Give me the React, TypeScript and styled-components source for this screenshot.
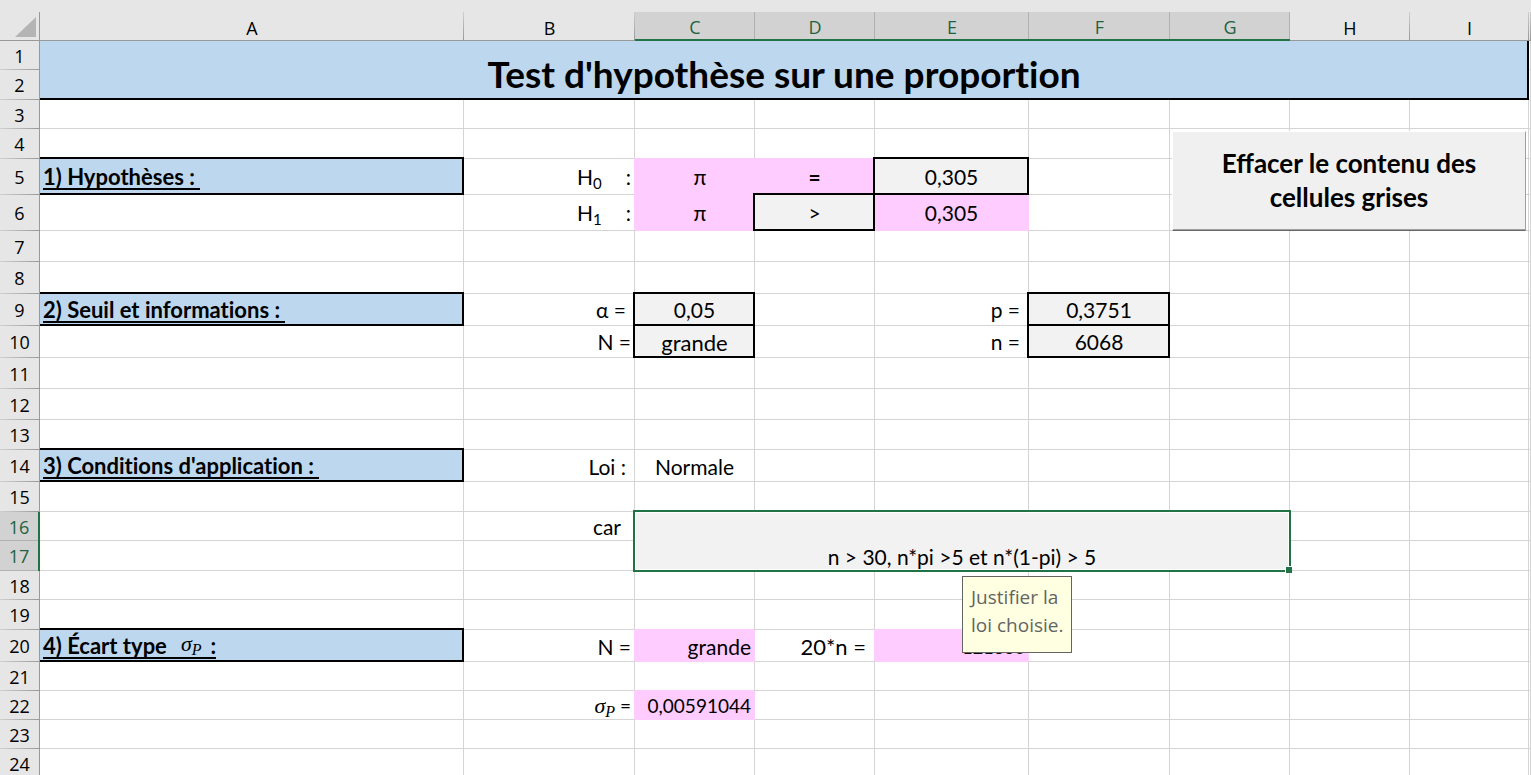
import React from "react";
import styled, { createGlobalStyle, css } from "styled-components";

const GREEN = "#217346";
const GRID = "#d4d4d4";
const HEAD = "#e6e6e6";
const HEAD_LINE = "#999999";
const SELECTED_HEAD = "#d2d2d2";
const INK = "#000000";

const fills = {
  none: "",
  pink: "#ffccff",
  gray: "#f2f2f2",
  blue: "#bdd7ee",
};

const sizes = { xs: 18, s: 19, t: 21, m: 21, w: 22, l: 37 };

const GlobalStyle = createGlobalStyle`
  *, *::before, *::after { box-sizing: border-box; }
  html, body { margin: 0; background: #fff; }
`;

const Sheet = styled.main`
  height: 100vh;
  overflow: hidden;
  padding-top: 12px;
  background: linear-gradient(${HEAD} 12px, #ffffff 12px);
  color: ${INK};
  font-family: Lato, "Open Sans", sans-serif;
  font-variant-ligatures: none;
`;

const Grid = styled.table`
  width: 100%;
  table-layout: fixed;
  border-collapse: separate;
  border-spacing: 0;
`;

const Col = styled.col<{ $w?: number }>`
  ${(p) => p.$w && `width: ${p.$w}px;`}
`;

const Row = styled.tr<{ $h: number }>`
  height: ${(p) => p.$h}px;
`;

const headText = css`
  padding: 0;
  font: 400 18px/24px "Open Sans", "Noto Sans", sans-serif;
  text-align: center;
  vertical-align: middle;
`;

const ColHead = styled.th<{ $selected?: boolean }>`
  ${headText}
  position: relative;
  padding-top: 3px;
  background: ${(p) => (p.$selected ? SELECTED_HEAD : HEAD)};
  color: ${(p) => (p.$selected ? "#1e6340" : INK)};
  border-bottom: ${(p) => (p.$selected ? `2px solid ${GREEN}` : `1px solid ${HEAD_LINE}`)};
  &::after {
    content: "";
    position: absolute;
    top: 0;
    right: 0;
    bottom: 0;
    width: 1px;
    background: ${(p) => (p.$selected ? "#b1b1b1" : `linear-gradient(#cfcfcf, ${HEAD_LINE})`)};
  }
`;

const Corner = styled.td`
  padding: 0 3px 3px 0;
  background: ${HEAD};
  border-right: 1px solid ${HEAD_LINE};
  border-bottom: 1px solid ${HEAD_LINE};
  vertical-align: bottom;
  svg {
    display: block;
    margin-left: auto;
  }
`;

const RowHead = styled.th<{ $selected?: boolean }>`
  ${headText}
  position: relative;
  background: ${(p) => (p.$selected ? SELECTED_HEAD : HEAD)};
  color: ${(p) => (p.$selected ? "#1e6340" : INK)};
  border-right: ${(p) => (p.$selected ? `2px solid ${GREEN}` : `1px solid ${HEAD_LINE}`)};
  &::after {
    content: "";
    position: absolute;
    left: 0;
    right: 0;
    bottom: 0;
    height: 1px;
    background: ${(p) => (p.$selected ? "#b1b1b1" : `linear-gradient(to right, #d0d0d0, ${HEAD_LINE})`)};
  }
`;

type CellStyle = {
  $fill?: keyof typeof fills;
  $align?: "left" | "center" | "right";
  $indent?: number;
  $size?: keyof typeof sizes;
  $boxed?: boolean;
  $open?: boolean;
  $bottom?: boolean;
  $bold?: boolean;
};

const Cell = styled.td<CellStyle>`
  position: relative;
  padding: ${(p) => (!p.$size || p.$size === "m" || p.$bottom ? 0 : 2)}px ${(p) => p.$indent ?? 3}px 0;
  border-right: 1px solid ${GRID};
  border-bottom: 1px solid ${GRID};
  font-size: ${(p) => sizes[p.$size ?? "m"]}px;
  font-weight: ${(p) => (p.$bold ? 700 : 400)};
  line-height: 24px;
  text-align: ${(p) => p.$align ?? "left"};
  vertical-align: ${(p) => (p.$bottom ? "bottom" : "middle")};
  white-space: pre;
  ${(p) =>
    p.$fill &&
    css`
      background: ${fills[p.$fill]};
      border-color: ${fills[p.$fill]};
    `}
  ${(p) => p.$fill === "pink" && `box-shadow: -1px -1px 0 ${fills.pink};`}
  ${(p) =>
    p.$boxed &&
    css`
      &::after {
        content: "";
        position: absolute;
        inset: -2px -1px -1px -2px;
        border: 2px solid ${INK};
        z-index: 1;
      }
    `}
  ${(p) =>
    p.$open &&
    css`
      &::after {
        left: 0;
        border-left: 0;
      }
    `}
`;

const TitleCell = styled(Cell)`
  line-height: 50px;
  &::after {
    top: 0;
    border-top: 0;
  }
`;

const SelectedCell = styled(Cell)`
  line-height: 26px;
  &::before {
    content: "";
    position: absolute;
    z-index: 1;
    inset: -2px;
    border: 2px solid ${GREEN};
    box-shadow: inset 0 0 0 1px #ffffff;
  }
  &::after {
    content: "";
    position: absolute;
    z-index: 1;
    right: -3px;
    bottom: -3px;
    width: 7px;
    height: 7px;
    background: ${GREEN};
    border: solid #ffffff;
    border-width: 1px 0 0 1px;
  }
`;

const Section = styled.span`
  display: inline-block;
  padding-bottom: 1px;
  background: linear-gradient(${INK}, ${INK}) 0 100% / 100% 2px no-repeat;
  vertical-align: top;
`;

const Hypothesis = styled.span`
  display: inline-flex;
  gap: 24px;
  sub {
    font-size: 15px;
    line-height: 0;
    vertical-align: -4px;
  }
`;

const Sigma = styled.i`
  font: italic 400 22px/20px "Liberation Serif", serif;
  sub {
    font-size: 16px;
    line-height: 0;
    vertical-align: -4px;
  }
`;

const RaisedSigma = styled(Sigma)`
  display: inline-block;
  padding: 0 9px 0 14px;
  vertical-align: 3px;
`;

const ClearButton = styled.button`
  position: absolute;
  z-index: 2;
  top: 2px;
  left: 2px;
  width: 354px;
  height: 100px;
  padding: 0 40px 2px;
  background: #f0f0f0;
  border: 1px solid #ffffff;
  border-right-color: #a0a0a0;
  border-bottom-color: #696969;
  box-shadow: inset 0 -1px 0 #a0a0a0;
  color: ${INK};
  font: 700 26px/34px Lato, "Open Sans", sans-serif;
  white-space: normal;
`;

const InputHint = styled.div`
  position: absolute;
  z-index: 3;
  top: 64px;
  left: 50%;
  width: 110px;
  height: 77px;
  padding: 6px 8px;
  background: #ffffe1;
  border: 1px solid #646464;
  color: #646464;
  font: 400 19px/28px "Open Sans", "Noto Sans", sans-serif;
  text-align: left;
`;

const SigmaP = () => (
  <>
    σ<sub>P</sub>
  </>
);

const columns = [
  { name: "A", width: 424 },
  { name: "B", width: 171 },
  { name: "C", width: 120, selected: true },
  { name: "D", width: 120, selected: true },
  { name: "E", width: 154, selected: true },
  { name: "F", width: 141, selected: true },
  { name: "G", width: 120, selected: true },
  { name: "H", width: 120 },
  { name: "I", width: 119 },
  { name: "" },
];

const rowHeights = [
  29, 30, 29, 30, 36, 36, 31, 32, 32, 32, 31, 31, 30, 32, 30, 29, 30, 29, 30, 32, 29, 29, 29, 29,
];

type CellData = CellStyle & {
  content: React.ReactNode;
  kind?: "title" | "selected";
  colSpan?: number;
  rowSpan?: number;
};

const section = (content: React.ReactNode): CellData => ({
  content: <Section>{content}</Section>,
  $fill: "blue",
  $size: "w",
  $bold: true,
  $boxed: true,
  $open: true,
});
const entry = (content: string): CellData => ({ content, $fill: "gray", $align: "center", $boxed: true });
const formula = (content: string): CellData => ({ content, $fill: "pink", $align: "center" });
const result = (content: string, $size: CellStyle["$size"] = "s"): CellData => ({
  content,
  $fill: "pink",
  $align: "right",
  $size,
});
const label = (
  content: React.ReactNode,
  $indent = 3,
  $size: CellStyle["$size"] = "m",
): CellData => ({
  content,
  $align: "right",
  $indent,
  $size,
});
const hypothesis = (index: number) =>
  label(
    <Hypothesis>
      <span>
        H<sub>{index}</sub>
      </span>
      <span>:</span>
    </Hypothesis>,
  );

const cells: Record<string, CellData> = {
  A1: {
    content: "Test d'hypothèse sur une proportion",
    kind: "title",
    colSpan: 9,
    rowSpan: 2,
    $fill: "blue",
    $align: "center",
    $size: "l",
    $bold: true,
    $boxed: true,
    $open: true,
    $bottom: true,
  },
  G4: { content: <ClearButton type="button">Effacer le contenu des cellules grises</ClearButton> },
  A5: section("1) Hypothèses : "),
  B5: hypothesis(0),
  C5: formula("  π"),
  D5: { ...formula("="), $bold: true },
  E5: entry("0,305"),
  B6: hypothesis(1),
  C6: formula("  π"),
  D6: entry(">"),
  E6: formula("0,305"),
  A9: section("2) Seuil et informations : "),
  B9: label("α =", 8),
  C9: entry("0,05"),
  E9: label("p =", 8),
  F9: entry("0,3751"),
  B10: label("N ="),
  C10: { ...entry("grande"), $size: "w" },
  E10: label("n =", 8),
  F10: entry("6068"),
  A14: section("3) Conditions d'application : "),
  B14: label("Loi :", 8, "t"),
  C14: { content: "Normale", $align: "center", $size: "t" },
  B16: label("car", 13, "t"),
  C16: {
    content: (
      <>
        n &gt; 30, n*pi &gt;5 et n*(1-pi) &gt; 5
        <InputHint role="note">
          Justifier la{"\n"}loi choisie.
        </InputHint>
      </>
    ),
    kind: "selected",
    colSpan: 5,
    rowSpan: 2,
    $fill: "gray",
    $align: "center",
    $size: "t",
    $bottom: true,
  },
  A20: section(
    <>
      4) Écart type
      <RaisedSigma>
        <SigmaP />
      </RaisedSigma>
      :
    </>,
  ),
  B20: label("N =", 3, "t"),
  C20: result("grande", "t"),
  D20: label("20*n =", 8, "w"),
  E20: result("121360", "xs"),
  B22: label(
    <>
      <Sigma>
        <SigmaP />
      </Sigma>
      {" ="}
    </>,
    3,
    "s",
  ),
  C22: result("0,00591044"),
};

/* Positions hidden under a merged range, keyed by row number. */
const coveredColumns: Record<number, string> = {
  1: "BCDEFGHI",
  2: "ABCDEFGHI",
  16: "DEFG",
  17: "CDEFG",
};

const renderCell = (column: string, row: number) => {
  if (column && coveredColumns[row]?.includes(column)) return null;
  const key = column + row;
  const data = cells[key];
  if (!data) return <Cell key={key} />;
  const { content, kind, ...rest } = data;
  const Component = kind === "title" ? TitleCell : kind === "selected" ? SelectedCell : Cell;
  return (
    <Component key={key} {...rest}>
      {content}
    </Component>
  );
};

export default function App() {
  return (
    <>
      <GlobalStyle />
      <Sheet>
        <Grid>
          <colgroup>
            <Col $w={40} />
            {columns.map((c) => (
              <Col key={c.name} $w={c.width} />
            ))}
          </colgroup>
          <thead>
            <Row $h={29}>
              <Corner>
                <svg width="21" height="20" viewBox="0 0 21 20" aria-hidden="true">
                  <path d="M21 0V20H0Z" fill="#b4b4b4" />
                </svg>
              </Corner>
              {columns.map((c) => (
                <ColHead key={c.name} scope="col" $selected={c.selected}>
                  {c.name}
                </ColHead>
              ))}
            </Row>
          </thead>
          <tbody>
            {rowHeights.map((height, i) => (
              <Row key={i} $h={height}>
                <RowHead scope="row" $selected={i === 15 || i === 16}>
                  {i + 1}
                </RowHead>
                {columns.map((c) => renderCell(c.name, i + 1))}
              </Row>
            ))}
          </tbody>
        </Grid>
      </Sheet>
    </>
  );
}
